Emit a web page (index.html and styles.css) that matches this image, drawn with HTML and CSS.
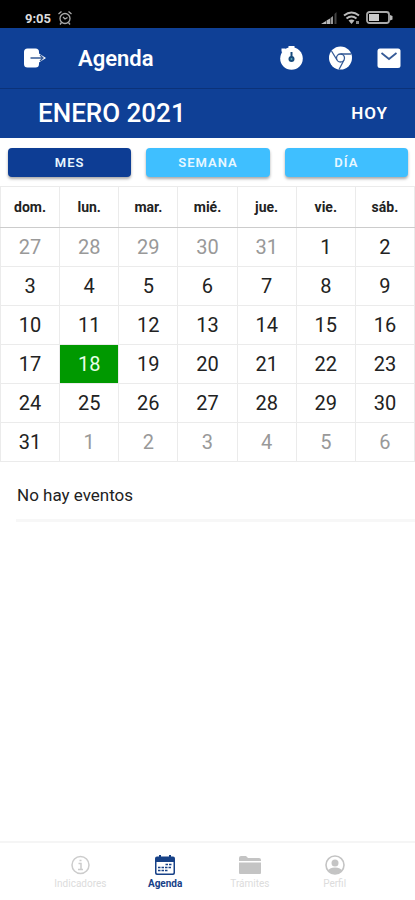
FILE: index.html
```html
<!DOCTYPE html>
<html lang="es">
<head>
<meta charset="utf-8">
<meta name="viewport" content="width=device-width, initial-scale=1">
<title>Agenda</title>
<link rel="stylesheet" href="styles.css">
</head>
<body>
<div class="status">
  <span class="clock">9:05</span>
  <svg class="alarm" width="16" height="16" viewBox="0 0 16 16" fill="none" stroke="#aaa" stroke-width="1.3"><circle cx="8" cy="8.500" r="5"/><path d="M1.500 4 4.500 1.500M14.500 4 11.500 1.500M4.500 12.500 3 14.500M11.500 12.500 13 14.500M6 7l2 2 2.500-1.500"/></svg>
  <span class="signals">
    <svg width="17" height="13" viewBox="0 0 17 13"><path d="M0 12 5 9v3zM5.500 8.500l3.500-2V12H5.500z" fill="#bbb"/><path d="M9.500 6l2.500-2v8H9.500z" fill="#999"/><path d="M13.500 2 15.500 0v12h-2z" fill="#444"/></svg>
    <svg width="18" height="14" viewBox="0 0 18 14"><g fill="none" stroke="#bbb" stroke-width="2"><path d="M1 4.500q7.500-6 15 0M3.500 7.500q5-4 10 0"/></g><path d="m5.500 9.500q3-2 6 0l-3 3.500z" fill="#bbb"/><path d="M13 10h3v3h-3z" fill="#888"/></svg>
    <svg width="27" height="14" viewBox="0 0 27 14"><rect x="1" y="1" width="22" height="11" rx="2.500" fill="none" stroke="#aaa" stroke-width="1.800"/><path d="M3 3h10v7H3z" fill="#ccc"/><path d="M24 4l2.500 1v3.500L24 9.500z" fill="#bbb"/></svg>
  </span>
</div>
<header class="toolbar">
  <button class="icon-btn" aria-label="Salir"><svg width="24" height="24" viewBox="0 0 24 24"><rect x="1" y="2.500" width="15" height="19" rx="3.500" fill="#fff"/><path d="M16 7.500 23 12l-7 4.500z" fill="#fff"/><path d="M7.500 12H20M17 9l3 3-3 3" fill="none" stroke="#365b97" stroke-width="1.300"/></svg></button>
  <h1>Agenda</h1>
  <div class="actions">
    <button class="icon-btn" aria-label="Temporizador"><svg width="24" height="24" viewBox="0 0 24 24"><circle cx="12.500" cy="12.500" r="11.300" fill="#fff"/><path d="M9.500 0h6v4h-6zM2.500 2.500l4 0-1 5-3-2z" fill="#fff"/><circle cx="12.500" cy="13" r="3" fill="#174a7c"/><path d="M12.500 6v7" stroke="#174a7c" stroke-width="2"/><circle cx="12.500" cy="13" r="1" fill="#5ba7b7"/></svg></button>
    <button class="icon-btn" aria-label="Navegador"><svg width="24" height="24" viewBox="0 0 24 24"><circle cx="12.500" cy="12" r="11.500" fill="#fff"/><g fill="none" stroke="#365b97" stroke-width="1.300"><circle cx="12.500" cy="12" r="4"/><path d="M12.500 8H23M9 14 3.500 5M16 14 11 23.500"/></g></svg></button>
    <button class="icon-btn" aria-label="Correo"><svg width="24" height="24" viewBox="0 0 24 24"><rect x="0.500" y="2.500" width="23" height="19.500" rx="2.500" fill="#fff"/><path d="M4.500 7 12 13l7.500-6" fill="none" stroke="#365b97" stroke-width="1.800"/></svg></button>
  </div>
</header>
<div class="month"><h2>ENERO 2021</h2><button class="today-btn">HOY</button></div>
<main>
  <div class="modes"><button class="mode selected">MES</button><button class="mode">SEMANA</button><button class="mode">DÍA</button></div>
  <table class="calendar">
    <thead><tr><th>dom.</th><th>lun.</th><th>mar.</th><th>mié.</th><th>jue.</th><th>vie.</th><th>sáb.</th></tr></thead>
    <tbody>
      <tr><td class="out">27</td><td class="out">28</td><td class="out">29</td><td class="out">30</td><td class="out">31</td><td>1</td><td>2</td></tr>
      <tr><td>3</td><td>4</td><td>5</td><td>6</td><td>7</td><td>8</td><td>9</td></tr>
      <tr><td>10</td><td>11</td><td>12</td><td>13</td><td>14</td><td>15</td><td>16</td></tr>
      <tr><td>17</td><td class="current">18</td><td>19</td><td>20</td><td>21</td><td>22</td><td>23</td></tr>
      <tr><td>24</td><td>25</td><td>26</td><td>27</td><td>28</td><td>29</td><td>30</td></tr>
      <tr><td>31</td><td class="out">1</td><td class="out">2</td><td class="out">3</td><td class="out">4</td><td class="out">5</td><td class="out">6</td></tr>
    </tbody>
  </table>
  <p class="events">No hay eventos</p>
</main>
<nav class="tabs">
  <a href="#" class="tab"><svg width="24" height="22" viewBox="0 0 24 22" fill="none" stroke="#ccc"><circle cx="12.500" cy="11" r="8.500" stroke-width="1.500"/><path d="M10.500 9.500H13V15M10 15.500h5M11.500 6.500h2" stroke-width="1.500"/></svg><span>Indicadores</span></a>
  <a href="#" class="tab active"><svg width="24" height="22" viewBox="0 0 24 22"><path d="M4 2.500h2V1h2v1.500h8V1h2v1.500h2q2 0 2 2V19q0 2-2 2H4q-2 0-2-2V4.500q0-2 2-2z" fill="#174187"/><path d="M3.500 8h17v10.500q0 1-1 1h-15q-1 0-1-1z" fill="#fff"/><path d="M12.500 10.500h6M5 13.500h13.500M5 16.500h10" stroke="#174187" stroke-width="1.500" stroke-dasharray="2.500 1"/></svg><span>Agenda</span></a>
  <a href="#" class="tab"><svg width="24" height="22" viewBox="0 0 24 22" fill="#c4c4c4"><path d="M1 7V4q0-2 2-2h5l2 2h11q2 0 2 2v1zM1 8.500h22V19q0 1-1 1H2q-1 0-1-1z"/></svg><span>Trámites</span></a>
  <a href="#" class="tab"><svg width="24" height="22" viewBox="0 0 24 22"><circle cx="12" cy="11" r="9" fill="none" stroke="#c4c4c4" stroke-width="1.600"/><circle cx="12" cy="9" r="3.500" fill="#c4c4c4"/><path d="M5 17q1-3.500 7-3.500T19 17q-3 3-7 3t-7-3z" fill="#c4c4c4"/></svg><span>Perfil</span></a>
</nav>
</body>
</html>
```
FILE: styles.css
```css
* { box-sizing: border-box; }
body {
  margin: 0;
  min-height: 100vh;
  display: flex;
  flex-direction: column;
  background: #fff;
  color: #222;
  font-family: Roboto, "Liberation Sans", sans-serif;
}
button { border: 0; padding: 0; background: none; color: #fff; font-family: inherit; }
svg { display: block; }
h1, h2, p { margin: 0; }
.status {
  height: 28px;
  padding: 8px 22px 0 25px;
  display: flex;
  align-items: center;
  gap: 6px;
  background: #000;
  color: #ddd;
}
.clock { font-size: 13px; font-weight: 700; }
.signals { margin-left: auto; display: flex; align-items: center; gap: 5px; }
.toolbar {
  height: 61px;
  padding: 0 14px 0 23px;
  display: flex;
  align-items: center;
  background: #0f4096;
  border-bottom: 1px solid #0b3279;
  color: #fff;
}
.toolbar h1 { margin-left: 31px; font-size: 22px; font-weight: 600; }
.actions { margin-left: auto; display: flex; gap: 25px; }
.month {
  height: 49px;
  padding: 0 27px 2px 38px;
  display: flex;
  align-items: center;
  justify-content: space-between;
  background: #0f4096;
  color: #fff;
}
.month h2 { font-size: 26px; font-weight: 500; }
.today-btn { font-size: 17px; font-weight: 600; letter-spacing: 1px; }
main { flex: 1; }
.modes { padding: 10px 7px 9px 8px; display: grid; grid-template-columns: repeat(3, 1fr); gap: 15px; }
.mode {
  height: 29px;
  border-radius: 4px;
  background: #3fbfff;
  box-shadow: 0 2px 3px #00000055;
  color: #e8f7ff;
  font-size: 13px;
  font-weight: 600;
  letter-spacing: 1px;
}
.mode.selected { background: #0d3d94; }
.calendar { width: 100%; table-layout: fixed; border-collapse: collapse; border: 1px solid #e8e8e8; text-align: center; }
.calendar th, .calendar td { padding: 0; border: 1px solid #ebebeb; }
.calendar th { height: 41px; border-bottom-color: #ccc; font-size: 14px; font-weight: 700; }
.calendar td { height: 39px; font-size: 20px; }
.calendar .out { color: #999; }
.calendar .current { background: #090; color: #e8ffe8; }
.events { margin-left: 16px; padding: 22px 0 13px 1px; border-bottom: 3px solid #f7f7f7; font-size: 17px; line-height: 22px; }
.tabs { height: 59px; padding: 11px 38px 0; display: grid; grid-template-columns: repeat(4, 1fr); border-top: 2px solid #f5f5f5; }
.tab { display: flex; flex-direction: column; align-items: center; gap: 2px; color: #dcdcdc; font-size: 10px; line-height: 12px; text-decoration: none; }
.tab.active { color: #174187; font-weight: 700; }
```
